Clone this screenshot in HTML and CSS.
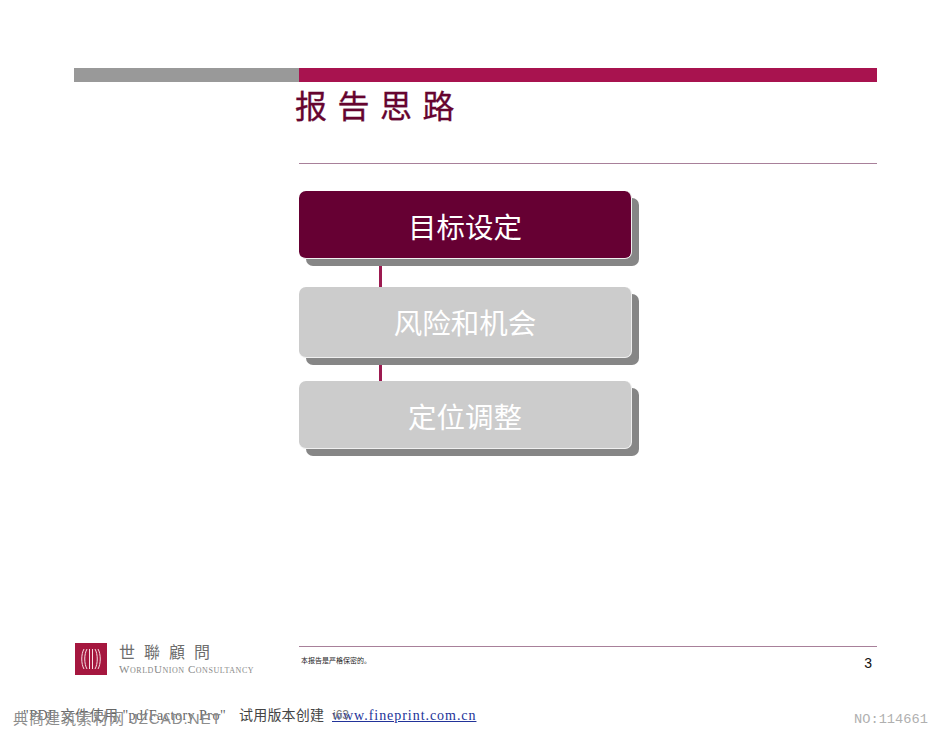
FILE: index.html
```html
<!DOCTYPE html>
<html lang="zh-CN">
<head>
<meta charset="utf-8">
<title>报告思路</title>
<link rel="stylesheet" href="styles.css">
</head>
<body>
<main class="slide">
  <div class="bars"><div class="bar-grey"></div><div class="bar-red"></div></div>
  <section class="content">
    <h1 class="title">报 告 思 路</h1>
    <hr class="rule title-rule">
    <div class="flow">
      <div class="step step-active">目标设定</div>
      <div class="link"></div>
      <div class="step step-tall">风险和机会</div>
      <div class="link link-short"></div>
      <div class="step">定位调整</div>
    </div>
  </section>
  <footer class="foot">
    <div class="logo">
      <svg class="mark" viewBox="0 0 32 32" width="32" height="32" aria-hidden="true">
        <rect width="32" height="32" fill="#a5173f"/>
        <g fill="none" stroke="#f6dfe4" stroke-width="1">
          <path d="M9 6C6 11 6 21 9 26"/>
          <path d="M12 6C9 11 9 21 12 26"/>
          <path d="M23 6C26 11 26 21 23 26"/>
          <path d="M20 6C23 11 23 21 20 26"/>
          <path d="M14.500 6V26M17.500 6V26"/>
        </g>
      </svg>
      <div class="logo-text">
        <div class="logo-cn">世 聯 顧 問</div>
        <div class="logo-en">WorldUnion Consultancy</div>
      </div>
    </div>
    <div class="foot-right">
      <hr class="rule">
      <div class="foot-row"><span class="confidential">本报告是严格保密的。</span><span class="page">3</span></div>
    </div>
  </footer>
  <div class="pdfline">
    <span class="pdf-lead">"PDF 文件使用 "pdfFactory Pro"</span>
    <span class="pdf-trial">试用版本创建</span>
    <a class="pdflink">www.fineprint.com.cn</a>
  </div>
  <div class="mark-left">典商建筑素材网 JZCAD.NET</div>
  <div class="mark-www">i63</div>
  <div class="mark-no">NO:114661</div>
</main>
</body>
</html>
```
FILE: styles.css
```css
* { box-sizing: border-box; }
html, body { margin: 0; background: #fff; }
.slide {
  position: relative;
  width: 950px;
  height: 734px;
  overflow: hidden;
  padding: 68px 73px 0 74px;
  font-family: "Liberation Sans", "Noto Sans CJK SC", sans-serif;
}
.bars { display: flex; height: 14px; }
.bar-grey { width: 225px; background: #999; }
.bar-red { flex: 1; background: #a8134f; }
.content { margin-left: 225px; height: 564px; }
.title {
  margin: 5px 0 0 -4px;
  font-size: 32px;
  line-height: 40px;
  font-weight: 400;
  color: #66042f;
  letter-spacing: 0.800px;
  white-space: nowrap;
  -webkit-text-stroke: 0.300px #66042f;
}
.rule { border: 0; height: 1px; margin: 0; background: #a8809a; }
.title-rule { margin-top: 36px; }
.flow { margin-top: 27px; width: 340px; }
.step {
  width: 333px;
  height: 68px;
  padding-top: 2px;
  background: #ccc;
  color: #fff;
  border-radius: 7px;
  box-shadow: 7px 7px 0 #868686;
  border-bottom: 1px solid #f0f0f0;
  border-right: 1px solid #f0f0f0;
  font-size: 28.500px;
  display: flex;
  align-items: center;
  justify-content: center;
}
.step-tall { height: 71px; padding: 0 0 2px; }
.step-active { background: #660033; }
.link { width: 2.500px; height: 21px; margin: 7px 0 0 80px; background: #9c1a50; }
.link-short { height: 16px; }
.foot { display: flex; height: 40px; margin-top: -5px; }
.logo { width: 225px; display: flex; gap: 12px; align-items: flex-start; margin-top: -3px; padding-left: 1px; }
.mark { flex: none; }
.logo-text { padding-top: 1px; font-family: "Liberation Serif", "Noto Sans CJK TC", serif; white-space: nowrap; }
.logo-cn { font-size: 16px; line-height: 18px; letter-spacing: 2.500px; color: #6d6d6d; }
.logo-en { font-size: 11px; line-height: 14px; font-variant: small-caps; letter-spacing: 0.550px; color: #888; }
.foot-right { flex: 1; }
.foot-row { display: flex; justify-content: space-between; align-items: flex-start; padding: 8px 5px 0 2px; }
.confidential { font-size: 7px; line-height: 12px; color: #222; }
.page { font-size: 14px; line-height: 16px; color: #111; }
.pdfline {
  position: absolute;
  left: 23px;
  top: 708px;
  display: flex;
  font-family: "Liberation Serif", "Noto Sans CJK SC", serif;
  font-size: 14px;
  line-height: 16px;
  color: #444;
  white-space: nowrap;
}
.pdf-lead { width: 216px; letter-spacing: 0.500px; color: #666; }
.pdf-trial { width: 93px; letter-spacing: 0.200px; }
.pdflink { color: #223399; text-decoration: underline; letter-spacing: 0.950px; }
.mark-left {
  position: absolute;
  left: 13px;
  top: 710px;
  font-size: 15px;
  line-height: 18px;
  color: #8c8c8c;
  letter-spacing: 1px;
  white-space: nowrap;
}
.mark-www {
  position: absolute;
  left: 333px;
  top: 707px;
  font-size: 12px;
  line-height: 16px;
  color: #777;
}
.mark-no {
  position: absolute;
  left: 854px;
  top: 712px;
  font-family: "Liberation Mono", monospace;
  font-size: 13.700px;
  line-height: 16px;
  color: #b0b0b0;
  white-space: nowrap;
}
```
